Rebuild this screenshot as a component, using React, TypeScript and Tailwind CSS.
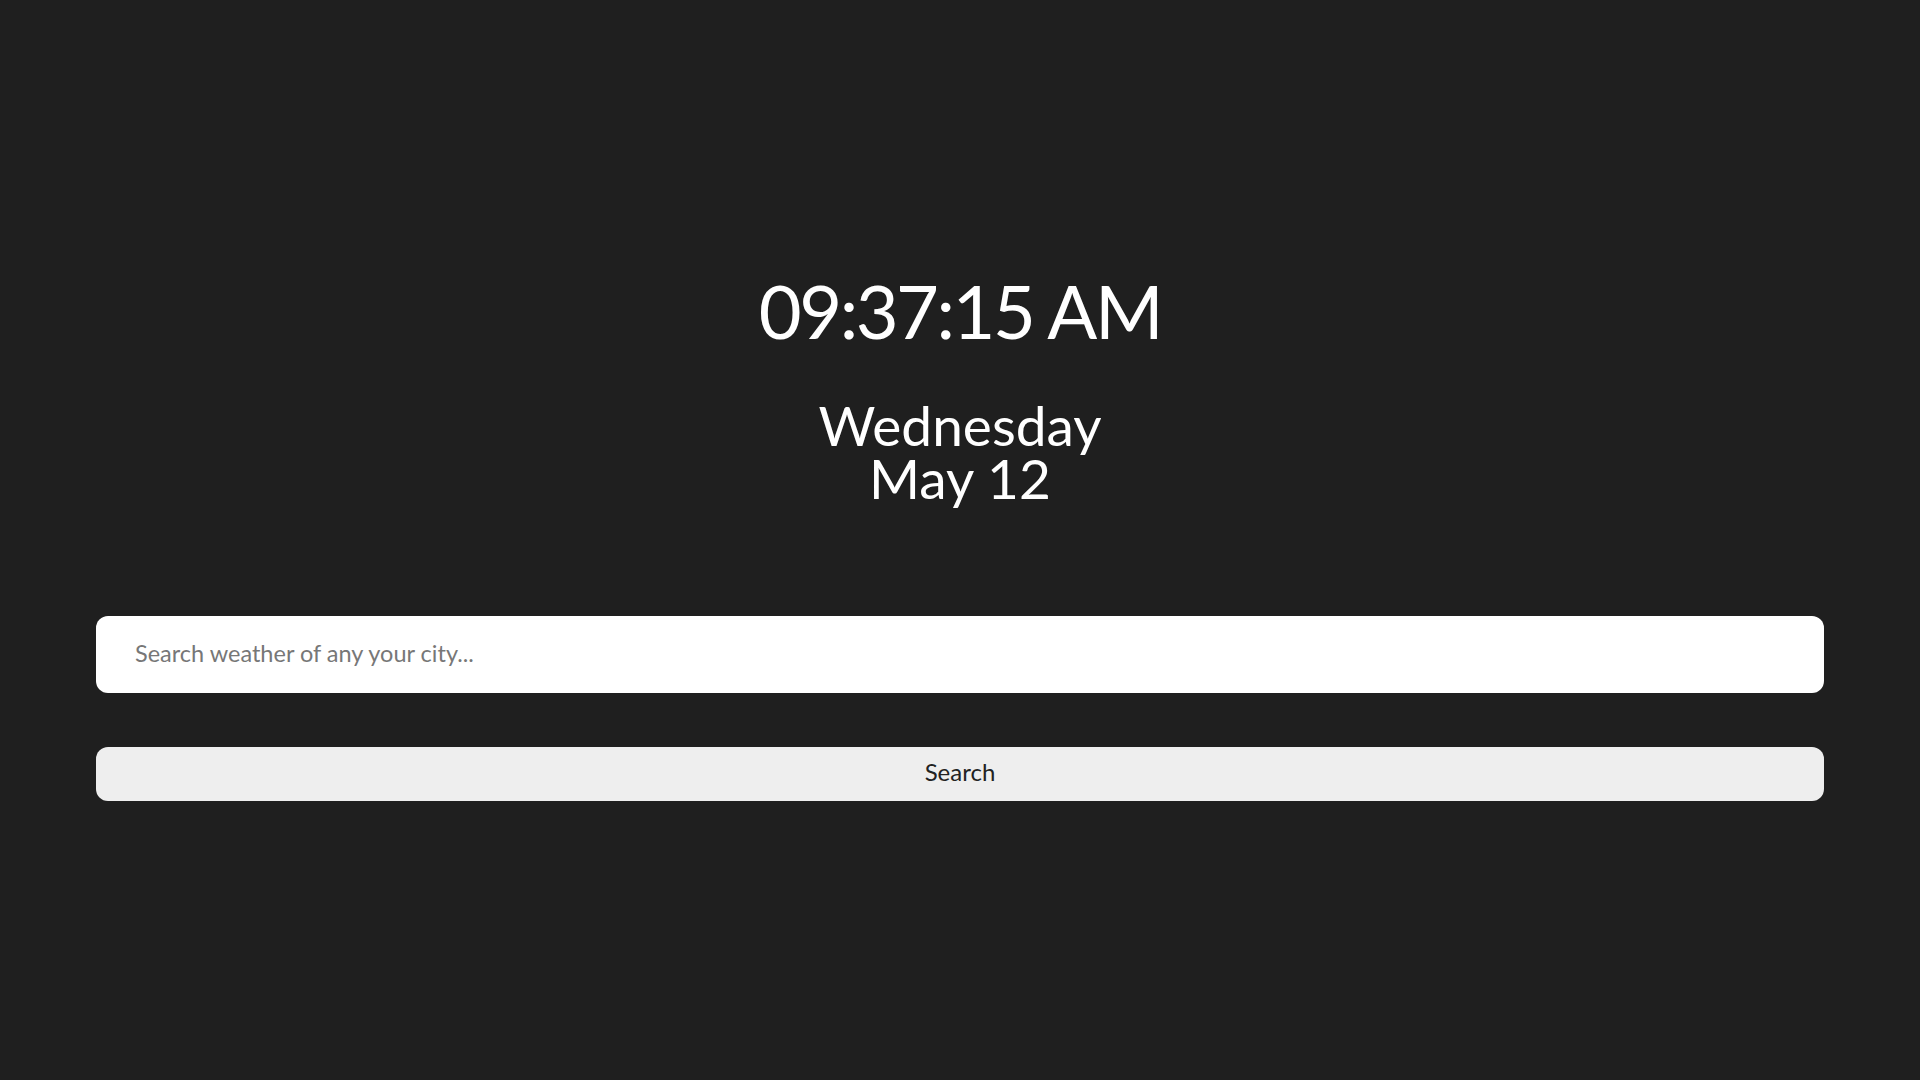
export default function App() {
  return (
    <div className="min-h-screen bg-[#1f1f1f] font-['Lato',sans-serif] px-24 pt-[274px]">
      <div className="text-center text-white text-[74px] leading-none tracking-[-2.5px]">09:37:15 AM</div>
      <div className="mt-[51px] text-center text-white text-[55px] leading-[53px]">
        <div>Wednesday</div>
        <div>May 12</div>
      </div>
      <input
        type="text"
        placeholder="Search weather of any your city..."
        className="mt-[111px] block w-full h-[77px] rounded-xl bg-white px-[39px] pb-[4px] text-[23.5px] text-[#222] placeholder:text-[#777] outline-none"
      />
      <button className="mt-[54px] block w-full h-[54px] rounded-xl bg-[#eeeeee] pb-[4px] text-[24px] text-[#222]">
        Search
      </button>
    </div>
  );
}
